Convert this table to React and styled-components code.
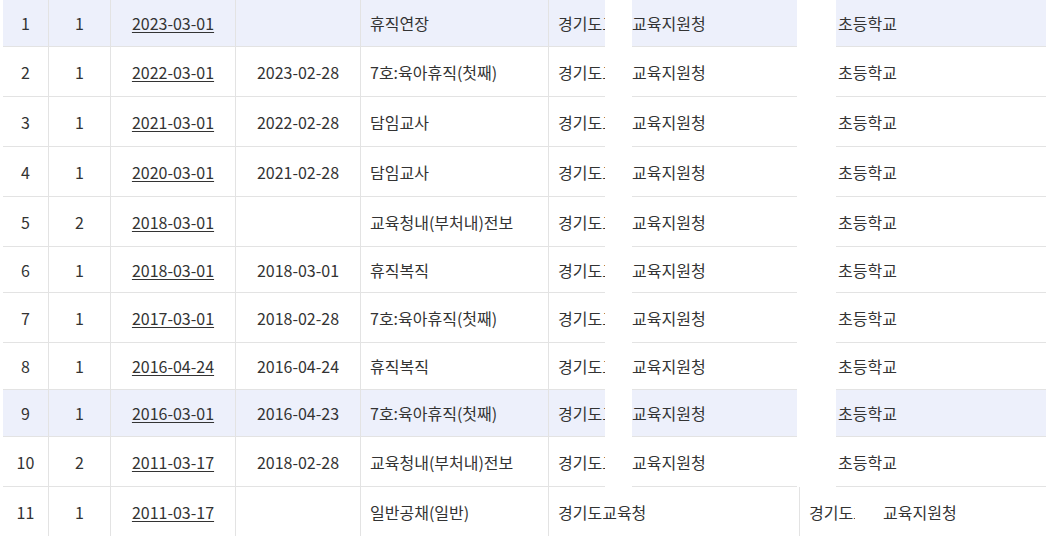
import React from 'react';
import styled, { createGlobalStyle } from 'styled-components';

const GlobalStyle = createGlobalStyle`
    html, body {
        margin: 0;
        padding: 0;
        background: #ffffff;
    }
    body {
        font-family: "Noto Sans CJK KR", "Noto Sans", sans-serif;
        color: #333;
    }
`;

const Table = styled.div`
    display: flex;
    flex-direction: column;
    width: 1046px;
    height: 536px;
    overflow: hidden;
    padding-left: 3px;
    box-sizing: border-box;
`;

const Row = styled.div`
    display: grid;
    grid-template-columns: ${(p) => p.$cols};
    height: ${(p) => p.$h}px;
    flex-shrink: 0;
`;

const Cell = styled.div`
    display: flex;
    align-items: center;
    justify-content: ${(p) => (p.$center ? 'center' : 'flex-start')};
    padding-left: ${(p) => p.$pad || 0}px;
    box-sizing: border-box;
    border-bottom: 1px solid #e3e3e3;
    border-left: ${(p) => (p.$line ? '1px solid #e3e3e3' : 'none')};
    background: ${(p) => (p.$hl ? '#edf0fb' : '#ffffff')};
    font-size: 16px;
    white-space: nowrap;
    overflow: hidden;
`;

const Gap = styled.div`
    background: #ffffff;
`;

const DateLink = styled.span`
    text-decoration: underline;
    text-underline-offset: 2px;
    color: #333;
`;

const mainCols = '45px 62px 125px 125px 188px 57px 27px 165px 39px 210px';
const lastCols = '45px 62px 125px 125px 188px 251px 56px 28px 163px';

const rows = [
    { no: 1, seq: 1, start: '2023-03-01', end: '', kind: '휴직연장', h: 47, hl: true },
    { no: 2, seq: 1, start: '2022-03-01', end: '2023-02-28', kind: '7호:육아휴직(첫째)', h: 50 },
    { no: 3, seq: 1, start: '2021-03-01', end: '2022-02-28', kind: '담임교사', h: 50 },
    { no: 4, seq: 1, start: '2020-03-01', end: '2021-02-28', kind: '담임교사', h: 50 },
    { no: 5, seq: 2, start: '2018-03-01', end: '', kind: '교육청내(부처내)전보', h: 50 },
    { no: 6, seq: 1, start: '2018-03-01', end: '2018-03-01', kind: '휴직복직', h: 46 },
    { no: 7, seq: 1, start: '2017-03-01', end: '2018-02-28', kind: '7호:육아휴직(첫째)', h: 50 },
    { no: 8, seq: 1, start: '2016-04-24', end: '2016-04-24', kind: '휴직복직', h: 47 },
    { no: 9, seq: 1, start: '2016-03-01', end: '2016-04-23', kind: '7호:육아휴직(첫째)', h: 47, hl: true },
    { no: 10, seq: 2, start: '2011-03-17', end: '2018-02-28', kind: '교육청내(부처내)전보', h: 50 },
];

const LeadCells = ({ r }) => (
    <>
        <Cell $center $hl={r.hl}>{r.no}</Cell>
        <Cell $center $line $hl={r.hl}>{r.seq}</Cell>
        <Cell $center $line $hl={r.hl}><DateLink>{r.start}</DateLink></Cell>
        <Cell $center $line $hl={r.hl}>{r.end}</Cell>
        <Cell $line $pad={9} $hl={r.hl}>{r.kind}</Cell>
    </>
);

const App = () => {
    const last = { no: 11, seq: 1, start: '2011-03-17', end: '', kind: '일반공채(일반)' };

    return (
        <>
            <GlobalStyle />
            <Table>
                {rows.map((r) => (
                    <Row key={r.no} $cols={mainCols} $h={r.h}>
                        <LeadCells r={r} />
                        <Cell $line $pad={9} $hl={r.hl}>경기도교육청</Cell>
                        <Gap />
                        <Cell $hl={r.hl}>교육지원청</Cell>
                        <Gap />
                        <Cell $pad={2} $hl={r.hl}>초등학교</Cell>
                    </Row>
                ))}
                <Row $cols={lastCols} $h={50}>
                    <LeadCells r={last} />
                    <Cell $line $pad={9}>경기도교육청</Cell>
                    <Cell $line $pad={9}>경기도교육청</Cell>
                    <Gap />
                    <Cell>교육지원청</Cell>
                </Row>
            </Table>
        </>
    );
};

export default App;
